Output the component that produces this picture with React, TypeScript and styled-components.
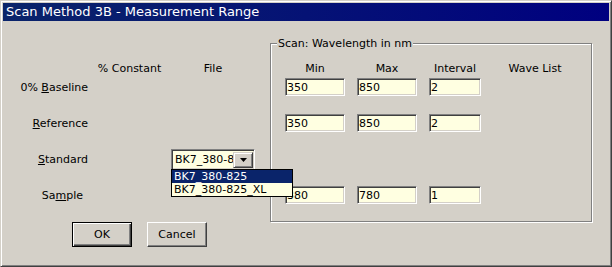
import React from 'react';
import styled, { createGlobalStyle } from 'styled-components';

const GlobalStyle = createGlobalStyle`
  html, body { margin: 0; padding: 0; background: #d4d0c8; }
  body {
    font-family: "DejaVu Sans", Verdana, sans-serif;
    font-size: 11px;
    color: #000;
  }
  *, *::before, *::after { box-sizing: border-box; }
`;

const Window = styled.div`
  width: 612px;
  height: 267px;
  background: #d4d0c8;
  border: 1px solid;
  border-color: #d4d0c8 #404040 #404040 #d4d0c8;
  box-shadow: inset 1px 1px 0 #fff, inset -1px -1px 0 #808080;
  padding: 2px;
  display: flex;
  flex-direction: column;
  overflow: hidden;
`;

const TitleBar = styled.div`
  height: 18px;
  background: linear-gradient(to right, #0a246a, #000080);
  color: #fff;
  font-size: 13px;
  line-height: 18px;
  padding-left: 3px;
  white-space: nowrap;
`;

const Client = styled.div`
  display: flex;
  align-items: flex-start;
`;

const LeftPane = styled.div`
  width: 267px;
  margin-top: 38px;
  display: flex;
  flex-direction: column;
`;

const HeaderRow = styled.div<{ $cols: string; $pad?: number }>`
  display: grid;
  grid-template-columns: ${(p) => p.$cols};
  column-gap: ${(p) => (p.$pad ? 12 : 0)}px;
  height: 19px;
  align-items: center;
  white-space: nowrap;
`;

const HeaderCell = styled.div<{ $col: number }>`
  grid-column: ${(p) => p.$col};
  text-align: center;
`;

const FieldGrid = styled.div<{ $cols: string; $gap?: number }>`
  display: grid;
  grid-template-columns: ${(p) => p.$cols};
  column-gap: ${(p) => p.$gap ?? 0}px;
  grid-template-rows: repeat(4, 18px);
  row-gap: 18px;
  align-items: center;
`;

const RowLabel = styled.div<{ $row: number; $right?: number }>`
  grid-column: 1;
  grid-row: ${(p) => p.$row};
  text-align: right;
  padding-right: ${(p) => p.$right ?? 0}px;
  white-space: nowrap;
  u { text-decoration: underline; text-underline-offset: 1px; }
`;

const ButtonRow = styled.div`
  display: flex;
  gap: 15px;
  margin-top: 18px;
  padding-left: 69px;
`;

const Button = styled.button<{ $default?: boolean }>`
  width: 60px;
  height: 25px;
  padding: 0;
  font-family: inherit;
  font-size: 11px;
  color: #000;
  background: #d4d0c8;
  border: 1px solid;
  border-color: ${(p) => (p.$default ? '#000' : '#fff #404040 #404040 #fff')};
  box-shadow: ${(p) =>
    p.$default
      ? 'inset 1px 1px 0 #fff, inset -1px -1px 0 #404040, inset -2px -2px 0 #808080'
      : 'inset -1px -1px 0 #808080, inset 1px 1px 0 #d4d0c8'};
`;

const GroupBox = styled.div`
  position: relative;
  margin-top: 22px;
  width: 322px;
  border: 1px solid #808080;
  box-shadow: inset 1px 1px 0 #fff, 1px 1px 0 #fff;
  padding: 15px 0 17px 14px;
`;

const Legend = styled.div`
  position: absolute;
  top: -7px;
  left: 6px;
  padding: 0 1px;
  line-height: 13px;
  background: #d4d0c8;
  white-space: nowrap;
`;

const TextBox = styled.input<{ $row: number; $col: number }>`
  grid-row: ${(p) => p.$row};
  grid-column: ${(p) => p.$col};
  width: 100%;
  height: 18px;
  margin: 0;
  padding: 0 0 0 1px;
  font-family: inherit;
  font-size: 11px;
  color: #000;
  background: #ffffe1;
  border: 1px solid;
  border-color: #808080 #fff #fff #808080;
  box-shadow: inset 1px 1px 0 #404040, inset -1px -1px 0 #d4d0c8;
  outline: none;
`;

const Combo = styled.div<{ $row: number; $col: number }>`
  position: relative;
  grid-row: ${(p) => p.$row};
  grid-column: ${(p) => p.$col};
  align-self: start;
  margin-top: -1px;
  width: 84px;
  height: 21px;
  display: flex;
  align-items: stretch;
  background: #ffffe1;
  border: 1px solid;
  border-color: #808080 #fff #fff #808080;
  box-shadow: inset 1px 1px 0 #404040, inset -1px -1px 0 #d4d0c8;
  padding: 2px 1px 1px 2px;
`;

const ComboText = styled.div`
  flex: 1;
  overflow: hidden;
  white-space: nowrap;
  line-height: 16px;
  padding-left: 1px;
`;

const ComboButton = styled.div`
  width: 20px;
  flex: none;
  background: #d4d0c8;
  border: 1px solid;
  border-color: #d4d0c8 #404040 #404040 #d4d0c8;
  box-shadow: inset 1px 1px 0 #fff, inset -1px -1px 0 #808080;
  display: flex;
  align-items: center;
  justify-content: center;
`;

const DropList = styled.div`
  position: absolute;
  top: 100%;
  left: -1px;
  width: 122px;
  border: 1px solid #000;
  background: #ffffe1;
  z-index: 10;
`;

const DropItem = styled.div<{ $selected?: boolean }>`
  height: 13px;
  line-height: 13px;
  padding-left: 2px;
  white-space: nowrap;
  background: ${(p) => (p.$selected ? '#0a246a' : '#ffffe1')};
  color: ${(p) => (p.$selected ? '#fff' : '#000')};
`;

const leftCols = '85px 83px 84px';
const groupCols = '60px 60px 52px 84px';

const scanRows: { row: number; values: [string, string, string] }[] = [
  { row: 1, values: ['350', '850', '2'] },
  { row: 2, values: ['350', '850', '2'] },
  { row: 4, values: ['380', '780', '1'] },
];

export default function App() {
  return (
    <>
      <GlobalStyle />
      <Window>
        <TitleBar>Scan Method 3B - Measurement Range</TitleBar>
        <Client>
          <LeftPane>
            <HeaderRow $cols={leftCols}>
              <HeaderCell $col={2}>% Constant</HeaderCell>
              <HeaderCell $col={3}>File</HeaderCell>
            </HeaderRow>
            <FieldGrid $cols={leftCols}>
              <RowLabel $row={1}>
                0% <u>B</u>aseline
              </RowLabel>
              <RowLabel $row={2}>
                <u>R</u>eference
              </RowLabel>
              <RowLabel $row={3}>
                <u>S</u>tandard
              </RowLabel>
              <RowLabel $row={4} $right={5}>
                Sa<u>m</u>ple
              </RowLabel>
              <Combo $row={3} $col={3}>
                <ComboText>BK7_380-825</ComboText>
                <ComboButton>
                  <svg width="7" height="4" viewBox="0 0 7 4">
                    <path d="M0 0h7L3.5 4z" fill="#000" />
                  </svg>
                </ComboButton>
                <DropList>
                  <DropItem $selected>BK7_380-825</DropItem>
                  <DropItem>BK7_380-825_XL</DropItem>
                </DropList>
              </Combo>
            </FieldGrid>
            <ButtonRow>
              <Button $default>OK</Button>
              <Button>Cancel</Button>
            </ButtonRow>
          </LeftPane>
          <GroupBox>
            <Legend>Scan: Wavelength in nm</Legend>
            <HeaderRow $cols={groupCols} $pad={12}>
              <HeaderCell $col={1}>Min</HeaderCell>
              <HeaderCell $col={2}>Max</HeaderCell>
              <HeaderCell $col={3}>Interval</HeaderCell>
              <HeaderCell $col={4}>Wave List</HeaderCell>
            </HeaderRow>
            <FieldGrid $cols={groupCols} $gap={12}>
              {scanRows.map((r) =>
                r.values.map((v, i) => (
                  <TextBox
                    key={`${r.row}-${i}`}
                    $row={r.row}
                    $col={i + 1}
                    defaultValue={v}
                    readOnly
                  />
                ))
              )}
            </FieldGrid>
          </GroupBox>
        </Client>
      </Window>
    </>
  );
}
